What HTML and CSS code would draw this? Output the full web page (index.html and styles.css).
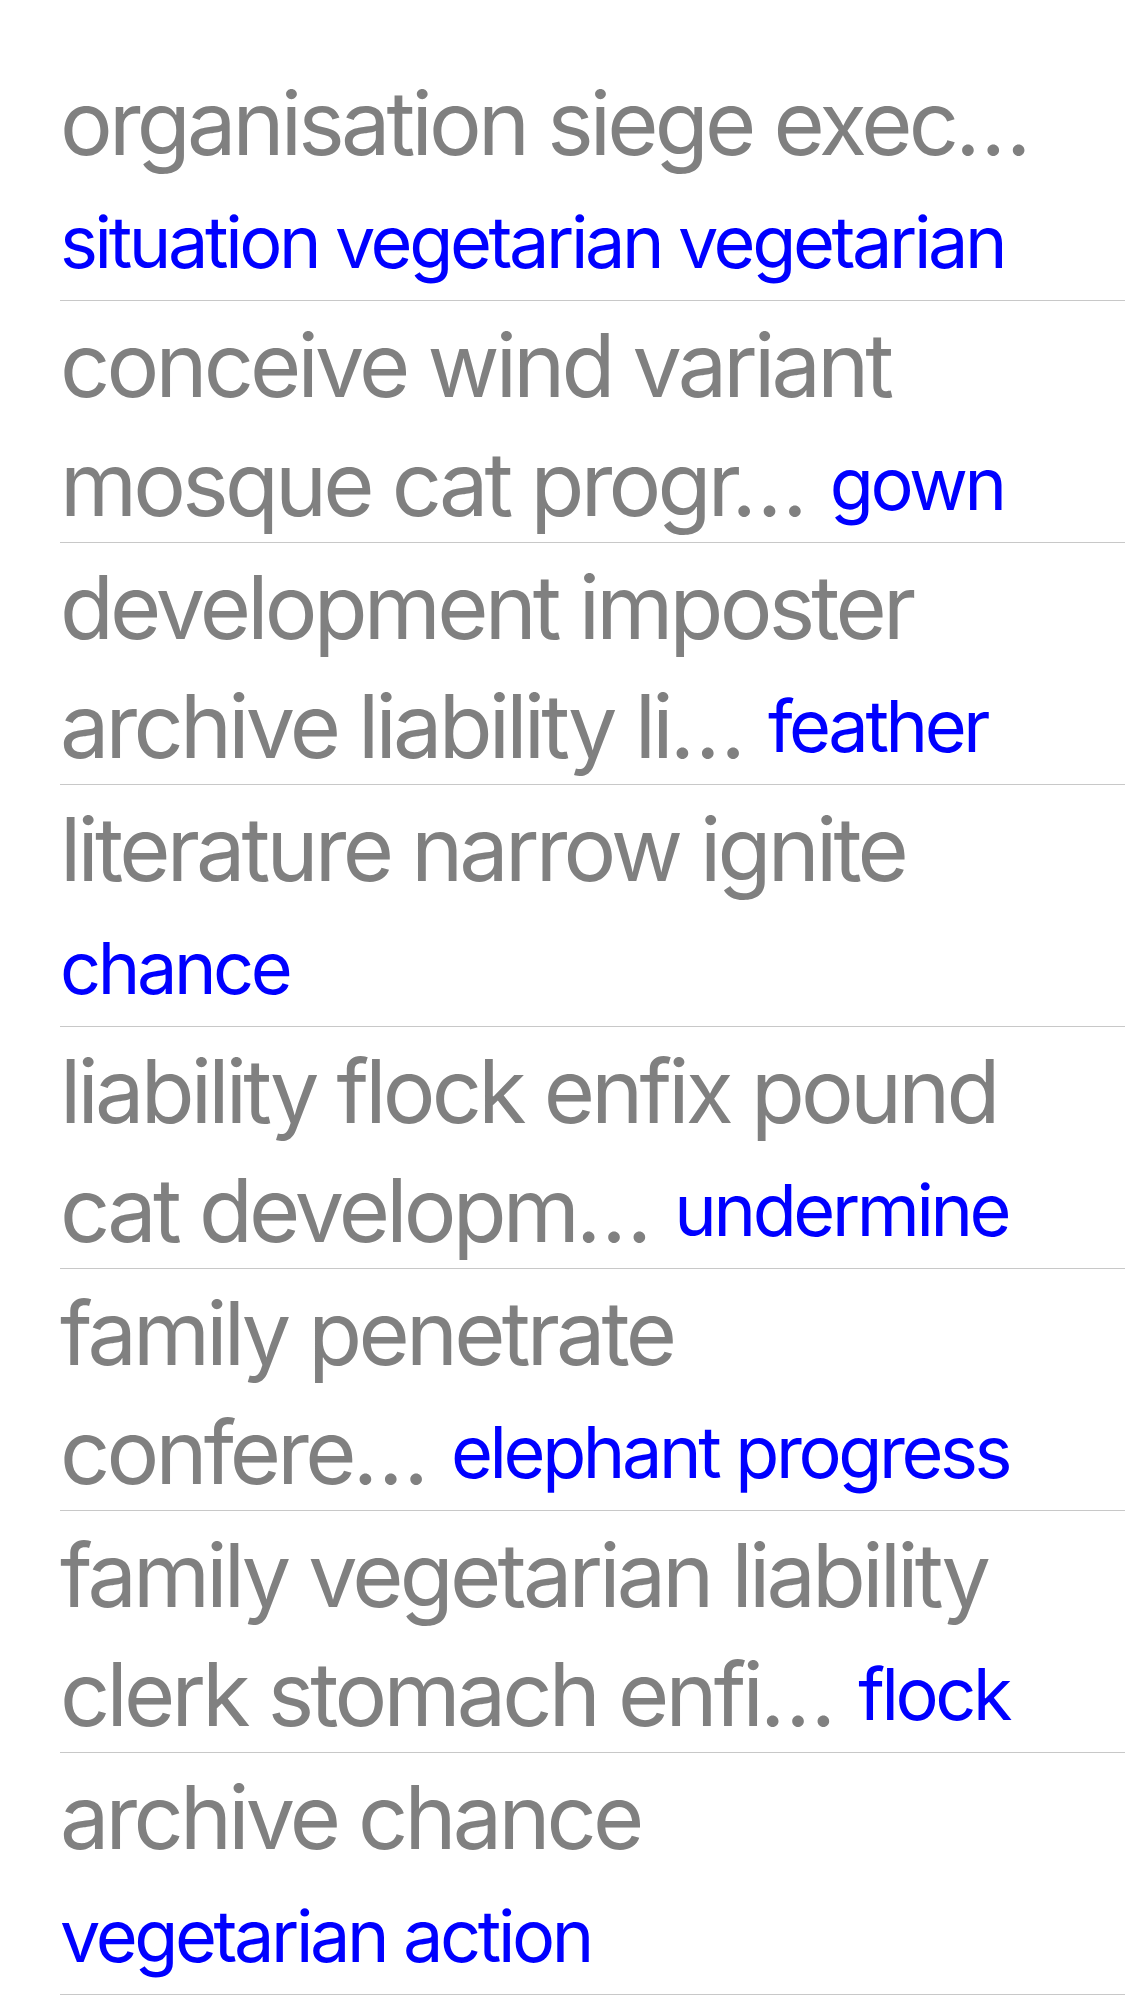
FILE: index.html
```html
<!DOCTYPE html>
<html lang="en">
<head>
<meta charset="utf-8">
<title>List</title>
<link rel="stylesheet" href="styles.css">
</head>
<body>
<ul class="list">
  <li class="row">
    <div class="line"><span class="title">organisation siege exec…</span></div>
    <div class="line"><span class="tag first">situation vegetarian vegetarian</span></div>
  </li>
  <li class="row">
    <div class="line"><span class="title">conceive wind variant</span></div>
    <div class="line"><span class="title">mosque cat progr…</span><span class="tag">gown</span></div>
  </li>
  <li class="row">
    <div class="line"><span class="title">development imposter</span></div>
    <div class="line"><span class="title">archive liability li…</span><span class="tag">feather</span></div>
  </li>
  <li class="row">
    <div class="line"><span class="title">literature narrow ignite</span></div>
    <div class="line"><span class="tag first">chance</span></div>
  </li>
  <li class="row">
    <div class="line"><span class="title">liability flock enfix pound</span></div>
    <div class="line"><span class="title">cat developm…</span><span class="tag">undermine</span></div>
  </li>
  <li class="row">
    <div class="line"><span class="title">family penetrate</span></div>
    <div class="line"><span class="title">confere…</span><span class="tag">elephant progress</span></div>
  </li>
  <li class="row">
    <div class="line"><span class="title">family vegetarian liability</span></div>
    <div class="line"><span class="title">clerk stomach enfi…</span><span class="tag">flock</span></div>
  </li>
  <li class="row">
    <div class="line"><span class="title">archive chance</span></div>
    <div class="line"><span class="tag first">vegetarian action</span></div>
  </li>
</ul>
</body>
</html>
```
FILE: styles.css
```css
html, body {
  margin: 0;
  padding: 0;
  background: #ffffff;
}

body {
  font-family: Inter, "Noto Sans", "Liberation Sans", sans-serif;
}

.list {
  list-style: none;
  margin: 0;
  padding: 59px 0 0 60px;
}

.row {
  box-sizing: border-box;
  height: 242px;
  padding-top: 3px;
  border-bottom: 1px solid #c8c8c8;
}

.line {
  font-size: 88px;
  line-height: 122px;
  height: 119px;
  white-space: nowrap;
}

.title {
  color: #808080;
  letter-spacing: -3.8px;
}

.tag {
  color: #0000ff;
  font-size: 72px;
  letter-spacing: -3.4px;
  vertical-align: 6px;
  margin-left: 26px;
}

.tag.first {
  margin-left: 0;
}
```
